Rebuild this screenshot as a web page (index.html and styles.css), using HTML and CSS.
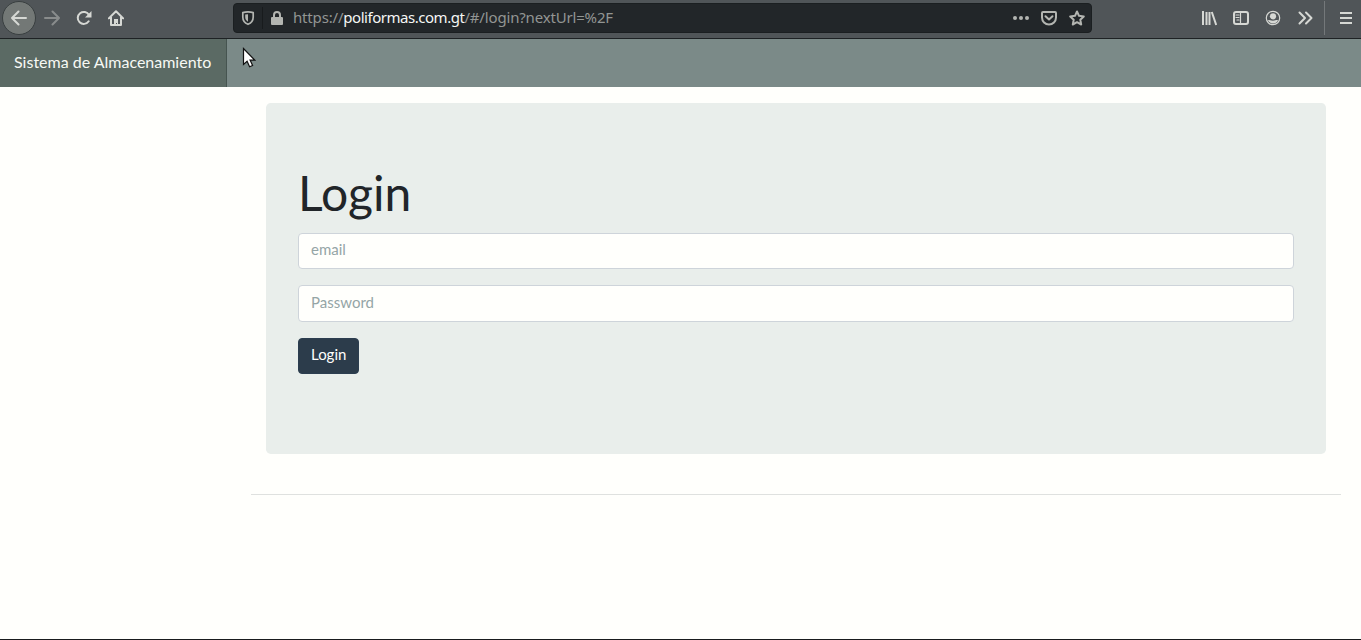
FILE: index.html
```html
<!DOCTYPE html>
<html lang="es">
<head>
<meta charset="utf-8">
<title>Sistema de Almacenamiento</title>
<link rel="stylesheet" href="styles.css">
</head>
<body>
<header class="toolbar">
  <div class="nav-buttons">
    <span class="back"><svg class="icon" viewBox="0 0 16 16"><path class="line" d="M15 8H1M7.500 1.500L1 8l6.500 6.500"/></svg></span>
    <svg class="icon dim" viewBox="0 0 16 16"><path class="line" d="M1 8h14M8.500 1.500L15 8l-6.500 6.500"/></svg>
    <svg class="icon" viewBox="0 0 16 16"><path class="line" d="M12.7 11.3A6 6 0 1 1 13 5"/><path class="fill" d="M15.500 1v6.500H9z"/></svg>
    <svg class="icon" viewBox="0 0 16 16"><path class="line" d="M.8 8.400L8 1.200l7.200 7.200M3 7v8h10V7"/><path class="fill" d="M6 9h4v6H9v-2H8v2H6z"/></svg>
  </div>
  <div class="urlbar">
    <svg class="icon soft" viewBox="0 0 16 16"><path class="line shield" d="M8 1.800c2 0 3.800.3 5.200.8V7c0 3.500-2 6-5.200 7.300C4.800 13 2.800 10.500 2.800 7V2.600C4.200 2.100 6 1.800 8 1.800z"/><path class="fill" d="M8 4.200v7.600C6.100 10.700 5.200 9 5.200 7V4.600z"/></svg>
    <span class="url-divider"></span>
    <svg class="icon soft" viewBox="0 0 16 16"><path class="line" d="M5 8V5a3 3 0 0 1 6 0v3"/><rect class="fill" x="2" y="7" width="12" height="8" rx="1"/></svg>
    <span class="url">https://<b>poliformas.com.gt</b>/#/login?nextUrl=%2F</span>
    <div class="url-actions">
      <svg class="icon soft" viewBox="0 0 16 16"><circle class="fill" cx="2" cy="8" r="2"/><circle class="fill" cx="8" cy="8" r="2"/><circle class="fill" cx="14" cy="8" r="2"/></svg>
      <svg class="icon soft" viewBox="0 0 16 16"><path class="line" d="M2 2h12q1 0 1 1v4.500a7 7 0 0 1-14 0V3q0-1 1-1zM4.500 6.200L8 9.500l3.500-3.300"/></svg>
      <svg class="icon soft" viewBox="0 0 16 16"><path class="line" d="M8 1.500l2 4.300 4.800.6-3.500 3.300.9 4.800L8 12.200l-4.200 2.300.9-4.800L1.200 6.400 6 5.800z"/></svg>
    </div>
  </div>
  <div class="tools">
    <svg class="icon" viewBox="0 0 16 16"><path class="bars" d="M2 1v14M5.500 2v13M8.500 2v13M10.800 2l4.400 13"/></svg>
    <svg class="icon" viewBox="0 0 16 16"><rect class="line" x="1" y="2" width="14" height="12" rx="2"/><path class="thin" d="M7.500 2v12M3 5h3M3 7.500h3M4 10h2"/></svg>
    <svg class="icon" viewBox="0 0 16 16"><circle class="thin" cx="8" cy="8" r="6.700"/><circle class="fill" cx="8" cy="6.300" r="3.100"/><path class="fill" d="M3 10.200c1.700-.4 2.700.5 5 .5s3.300-.9 5-.5C12 12.300 10 13.400 8 13.400S4 12.300 3 10.200z"/></svg>
    <svg class="icon" viewBox="0 0 16 16"><path class="line" d="M2.500 2.500L8 8l-5.500 5.500M9 2.500L14.500 8 9 13.500"/></svg>
  </div>
  <span class="tools-divider"></span>
  <svg class="icon menu" viewBox="0 0 16 16"><path class="bars" d="M2 3h12M2 8h12M2 13h12"/></svg>
</header>
<nav class="navbar"><a class="brand">Sistema de Almacenamiento</a></nav>
<main class="content">
  <form class="jumbotron">
    <h1 class="title">Login</h1>
    <input class="field" type="email" placeholder="email">
    <input class="field" type="password" placeholder="Password">
    <button class="submit" type="button">Login</button>
  </form>
  <hr class="rule">
</main>
<svg class="pointer" viewBox="0 0 14 22"><path d="M1.500 1.500v16l3.600-3.300 2.500 5.600 3-1.300-2.500-5.400h4.600z"/></svg>
</body>
</html>
```

FILE: styles.css
```css
* { box-sizing: border-box; }
body {
  margin: 0;
  height: 640px;
  overflow: hidden;
  display: flex;
  flex-direction: column;
  background: #fffffc;
  border-bottom: 1px solid #191b1d;
  color: #212529;
  font: 15px/1.5 Lato, sans-serif;
}
.toolbar {
  flex: none;
  display: flex;
  height: 39px;
  padding-bottom: 2px;
  align-items: center;
  background: #505558;
  border-bottom: 1px solid #1e2224;
  color: #d6d8d4;
}
.icon { width: 16px; height: 16px; flex: none; display: block; }
.soft { color: #b3b5b1; }
.dim { color: #898c8c; }
.line, .thin, .bars { fill: none; stroke: currentColor; stroke-width: 2; stroke-linejoin: round; stroke-linecap: round; }
.thin { stroke-width: 1.2; }
.shield { stroke-width: 1.7; }
.bars { stroke-linecap: butt; }
.fill { fill: currentColor; }
.nav-buttons { display: flex; align-items: center; gap: 16px; width: 233px; padding-left: 2px; }
.back {
  flex: none;
  display: flex;
  align-items: center;
  justify-content: center;
  width: 34px;
  height: 34px;
  margin-right: -8px;
  border: 1px solid #393f40;
  border-radius: 50%;
  background: #737876;
}
.urlbar {
  display: flex;
  align-items: center;
  width: 859px;
  height: 30px;
  padding: 0 7px 0 6px;
  border: 1px solid #1b1f21;
  border-radius: 4px;
  background: #222629;
}
.url-divider { width: 1px; height: 22px; margin: 0 6px; background: #181b1d; }
.url {
  margin-left: 8px;
  padding-bottom: 2px;
  color: #929593;
  font: 15px/20px "Noto Sans", sans-serif;
  letter-spacing: -0.17px;
  white-space: nowrap;
}
.url b { color: #f5f6f4; font-weight: 400; letter-spacing: -0.47px; }
.url-actions { display: flex; gap: 12px; margin-left: auto; margin-right: -1px; }
.tools { display: flex; gap: 16px; margin-left: 109px; }
.tools-divider { width: 1px; height: 34px; margin: 0 13px 0 11px; background: #74787a; }
.navbar {
  flex: none;
  display: flex;
  height: 48px;
  background: #7b8a88;
}
.brand {
  width: 227px;
  padding: 11px 14px 13px;
  border-right: 1px solid #465450;
  background: #5b6a64;
  color: #f7f9f4;
  font-size: 16px;
  line-height: 24px;
  white-space: nowrap;
}
.content { padding: 16px 20px 0 251px; }
.jumbotron {
  display: flex;
  flex-direction: column;
  align-items: flex-start;
  gap: 16px;
  height: 351px;
  margin: 0 15px;
  padding: 61px 32px 64px;
  border-radius: 4.8px;
  background: #e9eeeb;
}
.title { margin: 0 0 -5px; font-size: 48px; font-weight: 400; line-height: 57.6px; }
.field {
  width: 100%;
  height: 36.5px;
  padding: 4px 12px 7px;
  border: 1px solid #ced4da;
  border-radius: 4px;
  background: #fffffc;
  font: inherit;
}
.field::placeholder { color: #95a5a6; opacity: 1; }
.submit {
  height: 36.5px;
  padding: 4px 12px 7px;
  border: 1px solid #2c3e50;
  border-radius: 4px;
  background: #2c3c4b;
  color: #fffffc;
  font: inherit;
}
.rule { margin: 40px 0 0; border: 0; border-top: 1px solid #dfe1df; }
.pointer { position: absolute; left: 242px; top: 47px; width: 14px; height: 22px; fill: #fff; stroke: #111; stroke-width: 1.2; }
```
